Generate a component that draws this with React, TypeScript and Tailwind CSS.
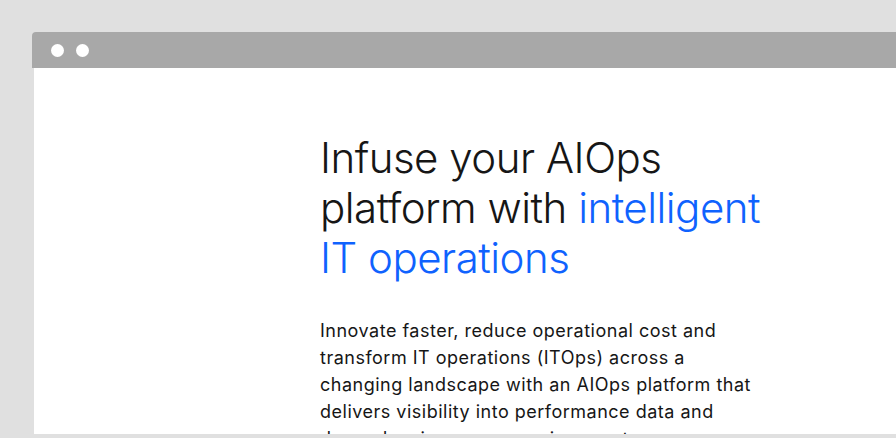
import React from "react";

export default function App() {
  return (
    <div className="w-[896px] h-[438px] bg-[#e0e0e0] pt-8 pl-8 overflow-hidden flex" style={{ fontFamily: "Inter, 'Noto Sans', sans-serif" }}>
      <div className="flex-1 flex flex-col mb-[4px]">
        <div className="h-9 bg-[#a8a8a8] rounded-tl-[4px] flex items-center gap-3 pl-[19px] shrink-0">
          <span className="w-[13px] h-[13px] rounded-full bg-white" />
          <span className="w-[13px] h-[13px] rounded-full bg-white" />
        </div>
        <div className="flex-1 ml-[2px] bg-white overflow-hidden pl-[286px] pt-[65px]">
          <h1 className="text-[42px] leading-[50px] font-light text-[#161616] tracking-[-0.5px] whitespace-nowrap">
            Infuse your AIOps
            <br />
            platform with <span className="text-[#0f62fe]">intelligent</span>
            <br />
            <span className="text-[#0f62fe]">IT operations</span>
          </h1>
          <p className="mt-[34px] text-[18px] leading-[27px] text-[#161616] tracking-[0.5px] whitespace-nowrap">
            Innovate faster, reduce operational cost and
            <br />
            transform IT operations (ITOps) across a
            <br />
            changing landscape with an AIOps platform that
            <br />
            delivers visibility into performance data and
            <br />
            dependencies across environments.
          </p>
        </div>
      </div>
    </div>
  );
}
